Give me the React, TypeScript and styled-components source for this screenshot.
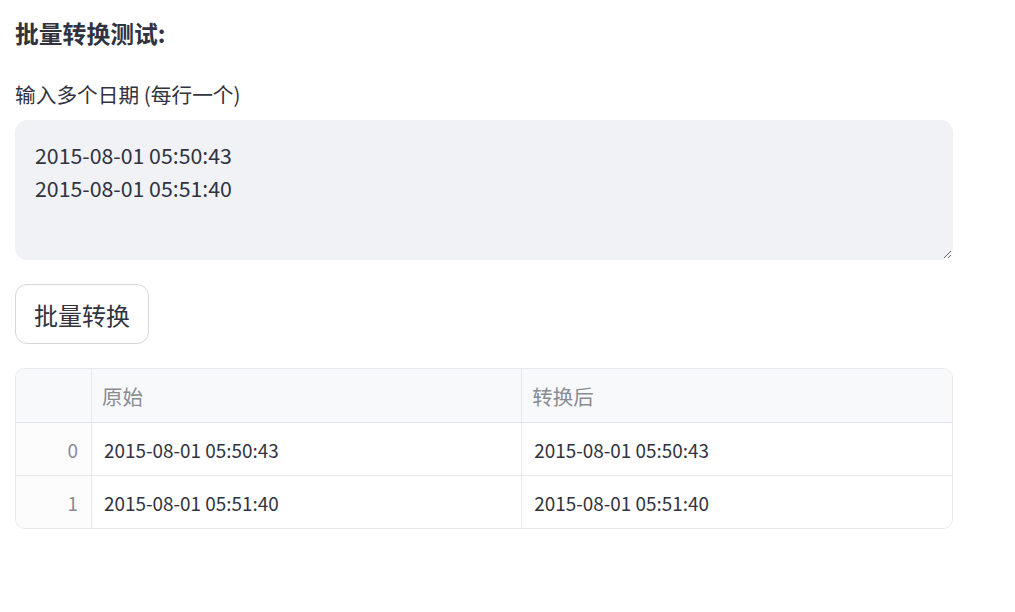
import React, { useState } from "react";
import styled, { createGlobalStyle } from "styled-components";

const GlobalStyle = createGlobalStyle`
  body {
    margin: 0;
    background: #ffffff;
    font-family: "Noto Sans CJK SC", "Noto Sans", sans-serif;
    color: #31333f;
  }
`;

const Page = styled.main`
  width: 938px;
  padding: 18px 15px 0 15px;
  display: flex;
  flex-direction: column;
`;

const Heading = styled.p`
  margin: 0;
  font-size: 23.8px;
  font-weight: 700;
  line-height: 30px;
`;

const Label = styled.label`
  margin: 32px 0 0 0;
  font-size: 20.7px;
  line-height: 28px;
  color: #31333f;
`;

const TextArea = styled.textarea`
  margin-top: 12px;
  box-sizing: border-box;
  width: 100%;
  height: 140px;
  padding: 17px 19px;
  border: 1px solid #f0f2f6;
  border-radius: 12px;
  background: #f0f2f6;
  color: #31333f;
  font-family: "Noto Sans CJK SC", "Noto Sans", sans-serif;
  font-size: 21.3px;
  line-height: 33px;
  resize: vertical;
  outline: none;
`;

const Button = styled.button`
  margin-top: 24px;
  align-self: flex-start;
  width: 134px;
  height: 60px;
  border: 1px solid #d5d6d9;
  border-radius: 12px;
  background: #ffffff;
  color: #31333f;
  font-family: "Noto Sans CJK SC", "Noto Sans", sans-serif;
  font-size: 24px;
  cursor: pointer;
`;

const TableWrap = styled.div`
  margin-top: 24px;
  border: 1px solid #e6e8ec;
  border-radius: 10px;
  overflow: hidden;
`;

const Table = styled.table`
  width: 100%;
  border-collapse: collapse;
  table-layout: fixed;
`;

const HeadCell = styled.th<{ $index?: boolean }>`
  height: 53px;
  padding: 0 10px;
  background: #f8f9fb;
  border-bottom: 1px solid #e2e4e9;
  border-left: ${(p) => (p.$index ? "none" : "1px solid #e6e8ec")};
  width: ${(p) => (p.$index ? "55px" : "auto")};
  text-align: left;
  font-weight: 400;
  font-size: 20.5px;
  color: #8a8c93;
`;

const Cell = styled.td<{ $index?: boolean }>`
  height: 52px;
  padding: 0 ${(p) => (p.$index ? "13px" : "12px")};
  border-top: 1px solid #e6e8ec;
  border-left: ${(p) => (p.$index ? "none" : "1px solid #e6e8ec")};
  text-align: ${(p) => (p.$index ? "right" : "left")};
  font-size: 18.9px;
  color: ${(p) => (p.$index ? "#8a8c93" : "#31333f")};
  background: ${(p) => (p.$index ? "#fcfcfd" : "#ffffff")};
`;

const rows = ["2015-08-01 05:50:43", "2015-08-01 05:51:40"];

const App: React.FC = () => {
  const [text, setText] = useState(rows.join("\n"));

  return (
    <>
      <GlobalStyle />
      <Page>
        <Heading>批量转换测试:</Heading>
        <Label>输入多个日期 (每行一个)</Label>
        <TextArea value={text} onChange={(e) => setText(e.target.value)} />
        <Button>批量转换</Button>
        <TableWrap>
          <Table>
            <thead>
              <tr>
                <HeadCell $index />
                <HeadCell>原始</HeadCell>
                <HeadCell>转换后</HeadCell>
              </tr>
            </thead>
            <tbody>
              {rows.map((r, i) => (
                <tr key={i}>
                  <Cell $index>{i}</Cell>
                  <Cell>{r}</Cell>
                  <Cell>{r}</Cell>
                </tr>
              ))}
            </tbody>
          </Table>
        </TableWrap>
      </Page>
    </>
  );
};

export default App;
